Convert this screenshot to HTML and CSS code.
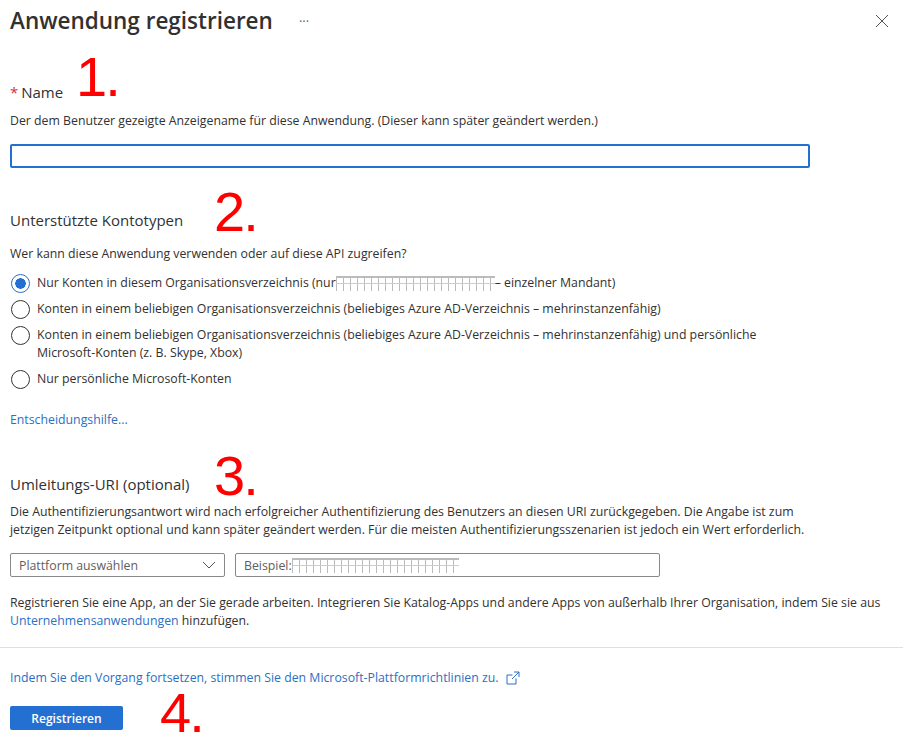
FILE: index.html
```html
<!doctype html>
<html lang="de">
<head>
<meta charset="utf-8">
<title>Anwendung registrieren</title>
<link rel="stylesheet" href="styles.css">
</head>
<body>
<div class="page">
	<header class="top">
		<h1>Anwendung registrieren</h1>
		<span class="more">···</span>
		<svg class="close" width="14" height="14" viewBox="0 0 14 14"><path d="M1 1L13 13M13 1L1 13" stroke="#555" fill="none"/></svg>
	</header>

	<section class="name-box">
		<h2><span class="req">*</span> Name</h2>
		<p class="desc">Der dem Benutzer gezeigte Anzeigename für diese Anwendung. (Dieser kann später geändert werden.)</p>
		<input type="text" class="name-input">
	</section>

	<section class="konto-box">
		<h2>Unterstützte Kontotypen</h2>
		<p class="desc">Wer kann diese Anwendung verwenden oder auf diese API zugreifen?</p>
		<ul class="radios">
			<li><i class="radio on"></i><span>Nur Konten in diesem Organisationsverzeichnis (nur<b class="redact r1"></b>– einzelner Mandant)</span></li>
			<li><i class="radio"></i><span>Konten in einem beliebigen Organisationsverzeichnis (beliebiges Azure AD-Verzeichnis – mehrinstanzenfähig)</span></li>
			<li><i class="radio"></i><span>Konten in einem beliebigen Organisationsverzeichnis (beliebiges Azure AD-Verzeichnis – mehrinstanzenfähig) und persönliche Microsoft-Konten (z. B. Skype, Xbox)</span></li>
			<li><i class="radio"></i><span>Nur persönliche Microsoft-Konten</span></li>
		</ul>
		<a href="#" class="link hilfe">Entscheidungshilfe...</a>
	</section>

	<section class="uri-box">
		<h2>Umleitungs-URI (optional)</h2>
		<p class="desc">Die Authentifizierungsantwort wird nach erfolgreicher Authentifizierung des Benutzers an diesen URI zurückgegeben. Die Angabe ist zum jetzigen Zeitpunkt optional und kann später geändert werden. Für die meisten Authentifizierungsszenarien ist jedoch ein Wert erforderlich.</p>
		<div class="uri-row">
			<div class="field select">
				<span>Plattform auswählen</span>
				<svg width="14" height="8" viewBox="0 0 14 8"><path d="M1 1L7 7L13 1" stroke="#555" fill="none"/></svg>
			</div>
			<div class="field uri"><span>Beispiel:</span><b class="redact r2"></b></div>
		</div>
		<p class="desc note">Registrieren Sie eine App, an der Sie gerade arbeiten. Integrieren Sie Katalog-Apps und andere Apps von außerhalb Ihrer Organisation, indem Sie sie aus <a href="#" class="link">Unternehmensanwendungen</a> hinzufügen.</p>
	</section>

	<footer class="bottom">
		<a href="#" class="link policy">Indem Sie den Vorgang fortsetzen, stimmen Sie den Microsoft-Plattformrichtlinien zu.
			<svg width="14" height="14" viewBox="0 0 14 14"><path d="M10 7.5V13H1V4H6.5M8 1H13V6M13 1L6 8" stroke="#2b6fc4" fill="none"/></svg>
		</a>
		<button type="button" class="btn">Registrieren</button>
	</footer>

	<span class="mark m1">1.</span>
	<span class="mark m2">2.</span>
	<span class="mark m3">3.</span>
	<span class="mark m4">4.</span>
</div>
</body>
</html>
```

FILE: styles.css
```css
body,h1,h2,p,ul,li{margin:0;padding:0;}
li{list-style:none;}
body{font-family:"Open Sans","Noto Sans",sans-serif;font-size:12.3px;color:#323130;background:#fff;}
a{text-decoration:none;}

.page{position:relative;width:903px;height:743px;overflow:hidden;}
.top{display:flex;align-items:center;height:42px;padding:0 14px 0 10px;}
.top h1{font-size:22.5px;font-weight:600;line-height:42px;}
.more{margin-left:26px;font-size:13px;color:#666;}
.close{margin-left:auto;}

h2{font-size:15px;font-weight:400;line-height:20px;}
.desc{font-size:12.3px;line-height:18px;}
.req{margin-right:-1px;color:#d13438;}

.name-box{padding:40px 10px 0;}
.name-box .desc{margin-top:10px;}
.name-input{display:block;box-sizing:border-box;width:800px;height:24px;margin:14px 0 0;border:2px solid #2470d2;border-radius:2px;outline:none;}

.konto-box{padding:42px 10px 0;}
.konto-box .desc{margin-top:15px;}
.radios{margin-top:11px;}
.radios li{display:flex;align-items:flex-start;margin-bottom:7px;width:790px;}
.radios li:nth-child(3){margin-bottom:8px;}
.radios span{flex:1;font-size:12.3px;line-height:18px;}
.radio{flex:none;box-sizing:border-box;width:19px;height:19px;margin:0 7px 0 1px;border:1px solid #333;border-radius:50%;}
.radio.on{border-color:#2470d2;background:radial-gradient(circle,#2470d2 0 5px,#fff 5.5px);}
.link{color:#2b6fc4;}
.hilfe{display:block;margin-top:22px;font-size:12.3px;line-height:18px;}

.uri-box{padding:45px 10px 0;}
.uri-box .desc{margin-top:9px;width:830px;}
.uri-row{display:flex;gap:10px;margin-top:14px;}
.field{box-sizing:border-box;display:flex;align-items:center;height:24px;padding:0 8px;border:1px solid #8a8886;border-radius:2px;font-size:12.3px;color:#605e5c;}
.select{width:215px;justify-content:space-between;}
.uri{width:425px;}
.uri-box .note{margin-top:17px;width:885px;}

/* geschwaerzte stellen */
.redact{display:inline-block;height:15px;vertical-align:middle;background:linear-gradient(#ccc,#ccc) 0 5px/100% 1px no-repeat,repeating-linear-gradient(90deg,#bbb 0 1px,transparent 1px 7px);border-top:2px solid #bbb;box-sizing:border-box;}
.r1{width:159px;}
.r2{width:167px;}

.bottom{margin-top:17px;padding:21px 10px 0;border-top:1px solid #e1dfdd;}
.policy{display:flex;align-items:center;gap:7px;font-size:12.3px;line-height:18px;}
.btn{display:block;width:113px;height:24px;margin-top:19px;padding:0;border:0;border-radius:2px;background:#2470d2;color:#fff;font:600 12px "Open Sans","Noto Sans",sans-serif;}

/* rote nummern, liegen ueber dem formular */
.mark{position:absolute;font-family:"Liberation Sans",sans-serif;font-size:56px;line-height:56px;letter-spacing:-2px;color:#f00;}
.m1{left:76px;top:49px;}
.m2{left:214px;top:184px;}
.m3{left:214px;top:448px;}
.m4{left:160px;top:685px;}
```
